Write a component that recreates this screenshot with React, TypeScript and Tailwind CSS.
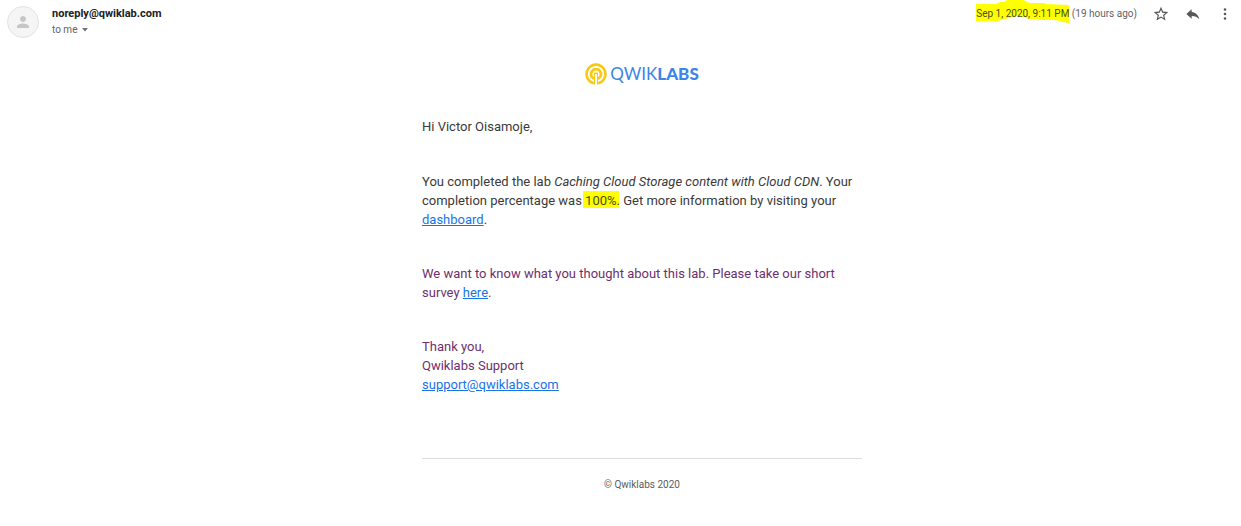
import type { ReactNode } from "react";

function Link({ href, children }: { href: string; children: ReactNode }) {
  return (
    <a href={href} className="text-[#1a73e8] underline">
      {children}
    </a>
  );
}

function Avatar() {
  return (
    <div className="flex size-8 shrink-0 items-center justify-center rounded-full border border-[#e2e2e2] bg-[#f5f5f5]">
      <svg viewBox="0 0 24 24" className="size-[18px] fill-[#c6c6c6]" aria-hidden="true">
        <path d="M12 12c2.21 0 4-1.79 4-4s-1.79-4-4-4-4 1.79-4 4 1.79 4 4 4zm0 2c-2.67 0-8 1.34-8 4v2h16v-2c0-2.66-5.33-4-8-4z" />
      </svg>
    </div>
  );
}

function SentTime() {
  return (
    <p className="text-[10px] leading-4 text-[#5f6368]">
      <span className="relative isolate text-[#4b4e20]">
        <svg
          viewBox="0 0 94 24"
          className="absolute -top-[9px] left-0 -z-10 h-6 w-[94px] fill-[#ffff00]"
          aria-hidden="true"
        >
          <path d="M0 5H20L24 3H28L31 1L34 0H46L49 2L54 4H68L70 5L93 6V24L86 23L84 22L78 21H64L60 20H52L48 18L40 17L34 19L28 20L22 22H0Z" />
        </svg>
        Sep 1, 2020, 9:11 PM
      </span>{" "}
      (19 hours ago)
    </p>
  );
}

function Header() {
  return (
    <header className="flex items-start pt-[6px] pr-2 pl-[7px]">
      <Avatar />
      <div className="ml-[13px] grow">
        <h1 className="text-[11px] leading-4 font-bold text-[#202124]">noreply@qwiklab.com</h1>
        <button type="button" className="flex items-center gap-[5px] text-[10px] leading-4 text-[#5f6368]">
          to me
          <svg viewBox="0 0 6 4" className="h-1 w-[6px] fill-[#6f7377]" aria-hidden="true">
            <path d="M0 0h6L3 3.5z" />
          </svg>
        </button>
      </div>
      <SentTime />
      <div className="ml-4 flex gap-4 text-[#55585b]">
        <button type="button" aria-label="Star">
          <svg viewBox="1 1 22 22" className="size-4 fill-current">
            <path d="M22 9.24l-7.19-.62L12 2 9.19 8.63 2 9.24l5.46 4.73L5.82 21 12 17.27 18.18 21l-1.63-7.03L22 9.24zM12 15.4l-3.76 2.27 1-4.28-3.32-2.88 4.38-.38L12 6.1l1.71 4.04 4.38.38-3.32 2.88 1 4.28L12 15.4z" />
          </svg>
        </button>
        <button type="button" aria-label="Reply">
          <svg viewBox="0 0 24 24" className="size-4 fill-current">
            <path d="M10 9V5l-8 7 8 7v-4.1c5 0 8.9 1.6 11.5 5.1-1-5-4-10-11.5-11z" />
          </svg>
        </button>
        <button type="button" aria-label="More">
          <svg viewBox="0 0 16 16" className="size-4 fill-current">
            <circle cx="8" cy="3.5" r="1.3" />
            <circle cx="8" cy="8" r="1.3" />
            <circle cx="8" cy="12.5" r="1.3" />
          </svg>
        </button>
      </div>
    </header>
  );
}

function Logo() {
  return (
    <div className="flex items-center justify-center gap-[3px]">
      <svg viewBox="0 0 22 22" className="size-[22px]" fill="none" aria-hidden="true">
        <path d="M8.9 20.2A9.4 9.4 0 1 1 13.1 20.2" stroke="#f5c914" strokeWidth="2.6" />
        <path d="M9 15.8A5 5 0 1 1 13 15.8" stroke="#f5c914" strokeWidth="2.8" />
        <path d="M9 9.500H13V21.500H9Z" fill="#f5c914" />
        <path d="M10 11H12V22H10Z" fill="#ffffff" />
      </svg>
      <span className="font-['Lato',sans-serif] text-[17px] leading-[22px] text-[#3b86e8]">
        QWIK<b className="font-black">LABS</b>
      </span>
    </div>
  );
}

export default function App() {
  return (
    <div className="bg-white font-['Roboto',sans-serif]">
      <Header />
      <main className="pt-[25px] pr-[9px] pl-[52px]">
        <article className="mx-auto max-w-[440px] text-[13px] leading-[19px] text-[#3a3a3a]">
          <Logo />
          <p className="mt-8">Hi Victor Oisamoje,</p>
          <p className="mt-9">
            You completed the lab <i>Caching Cloud Storage content with Cloud CDN</i>. Your completion percentage was{" "}
            <mark className="-mx-0.5 bg-[#ffff00] px-0.5 pt-0.5 text-[#4d4d10]">100%</mark>. Get more information by
            visiting your <Link href="#dashboard">dashboard</Link>.
          </p>
          <p className="mt-[35px] text-[#6e306e]">
            We want to know what you thought about this lab. Please take our short survey{" "}
            <Link href="#survey">here</Link>.
          </p>
          <p className="mt-[35px] text-[#6e306e]">
            Thank you,
            <br />
            Qwiklabs Support
            <br />
            <Link href="mailto:support@qwiklabs.com">support@qwiklabs.com</Link>
          </p>
          <footer className="mt-16 border-t border-[#dddddd] pt-[18px] text-center text-[10px] leading-4 text-[#5c5c5c]">
            © Qwiklabs 2020
          </footer>
        </article>
      </main>
    </div>
  );
}
